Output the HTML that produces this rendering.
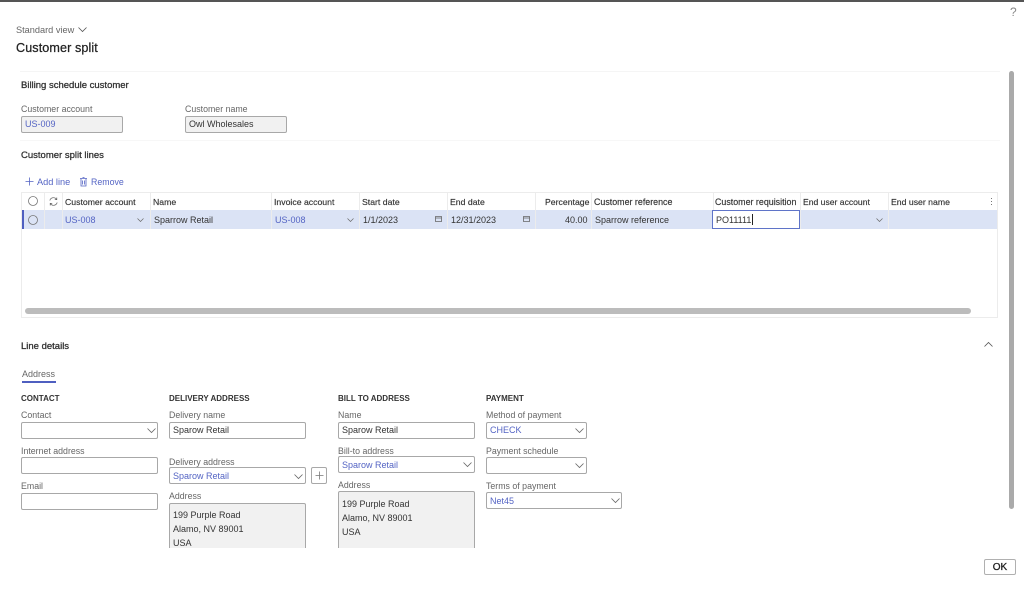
<!DOCTYPE html>
<html><head><meta charset="utf-8"><style>
html,body{margin:0;padding:0;background:#fff}
#p{position:relative;width:1024px;height:591px;overflow:hidden;background:#fff;font-family:"Liberation Sans",sans-serif;font-size:9px;color:#333;filter:blur(.3px)}
.t{position:absolute;line-height:14px;white-space:nowrap}
.l{color:#666}
.l8{font-size:8.8px !important}
.b{color:#333;font-size:9.5px;-webkit-text-stroke:.3px #333}
.c{color:#333;font-weight:bold;font-size:8px}
.h{color:#333;font-size:8.7px;-webkit-text-stroke:.15px #333}
.a{color:#5464c4}
.box{position:absolute;box-sizing:border-box;border:1px solid #a8a8a8;border-radius:2px;height:17px;background:#fff}
.ro{background:#f1f1f1}
.r{position:absolute}
.v{position:absolute;width:1px;background:#ececec;top:192px;height:37px}
svg{position:absolute;overflow:visible;fill:none}
#clip{position:absolute;left:0;top:390px;width:1024px;height:158px;overflow:hidden}
</style></head><body><div id="p">
<div class="r" style="left:0;top:0;width:1024px;height:1.5px;background:#555"></div>
<div class="t" style="left:1010px;top:5px;font-size:12px;color:#888">?</div>

<div class="t l" style="left:16px;top:23px;font-size:9.2px">Standard view</div>
<svg style="left:78px;top:27px" width="9" height="5"><path d="M.5.5L4.5 4.5L8.5.5" stroke="#555" stroke-width=".8"/></svg>
<div class="t" style="left:16px;top:41px;font-size:12.6px;color:#222;letter-spacing:.1px;-webkit-text-stroke:.25px #222">Customer split</div>

<div class="r" style="left:20px;top:71px;width:980px;height:1px;background:#f5f5f5"></div>
<div class="r" style="left:20px;top:140px;width:980px;height:1px;background:#f7f7f7"></div>
<div class="r" style="left:1009px;top:71px;width:5px;height:438px;background:#aaa;border-radius:3px"></div>

<div class="t b" style="left:21px;top:79px">Billing schedule customer</div>
<div class="t l l8" style="left:21px;top:102px">Customer account</div>
<div class="box ro" style="left:21px;top:116px;width:102px"></div>
<div class="t a" style="left:25px;top:117px">US-009</div>
<div class="t l l8" style="left:185px;top:102px">Customer name</div>
<div class="box ro" style="left:185px;top:116px;width:102px"></div>
<div class="t" style="left:189px;top:117px">Owl Wholesales</div>
<div class="t b" style="left:21px;top:149px">Customer split lines</div>

<svg style="left:25px;top:177px" width="10" height="10"><path d="M4.5 .5V8.5M.5 4.5H8.5" stroke="#5464c4" stroke-width=".8"/></svg>
<div class="t a" style="left:37px;top:175px;font-size:9.2px">Add line</div>
<svg style="left:79px;top:177px" width="9" height="10"><path d="M1 1.5H8M2 1.5V9H7V1.5M3.5 .5H5.5M3.5 3.5V7.5M5.5 3.5V7.5" stroke="#5464c4" stroke-width=".8"/></svg>
<div class="t a" style="left:91px;top:175px;font-size:8.8px">Remove</div>

<div class="r" style="left:21px;top:192px;width:977px;height:126px;box-sizing:border-box;border:1px solid #ececec"></div>
<div class="r" style="left:22px;top:210px;width:975px;height:19px;background:#dbe3f5"></div>
<div class="r" style="left:22px;top:210px;width:2px;height:19px;background:#4f5fc0"></div>
<div class="v" style="left:44px"></div><div class="v" style="left:62px"></div><div class="v" style="left:150px"></div><div class="v" style="left:271px"></div><div class="v" style="left:359px"></div><div class="v" style="left:447px"></div><div class="v" style="left:535px"></div><div class="v" style="left:591px"></div><div class="v" style="left:713px"></div><div class="v" style="left:800px"></div><div class="v" style="left:888px"></div>

<svg style="left:28px;top:196px" width="10" height="10"><circle cx="5" cy="5" r="4.5" stroke="#777" stroke-width=".8"/></svg>
<svg style="left:28px;top:215px" width="10" height="10"><circle cx="5" cy="5" r="4.5" stroke="#777" stroke-width=".8"/></svg>
<svg style="left:49px;top:197px" width="9" height="9"><path d="M.8 3.5A3.8 3.8 0 0 1 7.5 2.2M8.2 5.5A3.8 3.8 0 0 1 1.5 6.8M7.8 .5V2.6H5.8M1.2 8.5V6.4H3.2" stroke="#666" stroke-width=".7"/></svg>

<div class="t h" style="left:65px;top:195px">Customer account</div>
<div class="t h" style="left:153px;top:195px">Name</div>
<div class="t h" style="left:274px;top:195px">Invoice account</div>
<div class="t h" style="left:362px;top:195px">Start date</div>
<div class="t h" style="left:450px;top:195px">End date</div>
<div class="t h" style="left:545px;top:195px">Percentage</div>
<div class="t h" style="left:594px;top:195px;font-size:8.9px">Customer reference</div>
<div class="t h" style="left:715px;top:195px;font-size:8.9px">Customer requisition</div>
<div class="t h" style="left:803px;top:195px;font-size:8.6px">End user account</div>
<div class="t h" style="left:891px;top:195px">End user name</div>
<div class="r" style="left:991px;top:198px;width:1px;height:1px;background:#777;box-shadow:0 3px #777,0 6px #777"></div>

<div class="t a" style="left:65px;top:213px">US-008</div>
<svg style="left:137px;top:218px" width="7" height="4"><path d="M.5.5L3.5 3.5L6.5.5" stroke="#666" stroke-width=".7"/></svg>
<div class="t" style="left:154px;top:213px">Sparrow Retail</div>
<div class="t a" style="left:275px;top:213px">US-008</div>
<svg style="left:347px;top:218px" width="7" height="4"><path d="M.5.5L3.5 3.5L6.5.5" stroke="#666" stroke-width=".7"/></svg>
<div class="t" style="left:363px;top:213px">1/1/2023</div>
<svg style="left:435px;top:216px" width="7" height="6"><path d="M.5.5H6.5V5.5H.5ZM.5 2H6.5" stroke="#666" stroke-width=".8"/></svg>
<div class="t" style="left:451px;top:213px">12/31/2023</div>
<svg style="left:523px;top:216px" width="7" height="6"><path d="M.5.5H6.5V5.5H.5ZM.5 2H6.5" stroke="#666" stroke-width=".8"/></svg>
<div class="t" style="left:565px;top:213px">40.00</div>
<div class="t" style="left:595px;top:213px">Sparrow reference</div>
<div class="r" style="left:712px;top:210px;width:88px;height:19px;box-sizing:border-box;border:1px solid #5f74c8;background:#fff"></div>
<div class="t" style="left:716px;top:213px">PO11111</div>
<div class="r" style="left:752px;top:214px;width:1px;height:11px;background:#222"></div>
<svg style="left:876px;top:218px" width="7" height="4"><path d="M.5.5L3.5 3.5L6.5.5" stroke="#666" stroke-width=".7"/></svg>

<div class="r" style="left:25px;top:308px;width:946px;height:6px;background:#bcbcbc;border-radius:3px"></div>

<div class="t b" style="left:21px;top:340px">Line details</div>
<svg style="left:984px;top:342px" width="9" height="5"><path d="M.5 4.5L4.5.5L8.5 4.5" stroke="#555" stroke-width=".8"/></svg>
<div class="t l" style="left:22px;top:367px">Address</div>
<div class="r" style="left:22px;top:381px;width:34px;height:1.5px;background:#4f5fc0"></div>

<div class="t c" style="left:21px;top:392px">CONTACT</div>
<div class="t c" style="left:169px;top:392px">DELIVERY ADDRESS</div>
<div class="t c" style="left:338px;top:392px">BILL TO ADDRESS</div>
<div class="t c" style="left:486px;top:392px">PAYMENT</div>

<div class="t l l8" style="left:21px;top:408px">Contact</div>
<div class="box" style="left:21px;top:422px;width:137px"></div>
<svg style="left:147px;top:428px" width="9" height="5"><path d="M.5.5L4.5 4.5L8.5.5" stroke="#666" stroke-width=".8"/></svg>
<div class="t l l8" style="left:21px;top:444px">Internet address</div>
<div class="box" style="left:21px;top:457px;width:137px"></div>
<div class="t l l8" style="left:21px;top:479px">Email</div>
<div class="box" style="left:21px;top:493px;width:137px"></div>

<div class="t l l8" style="left:169px;top:408px">Delivery name</div>
<div class="box" style="left:169px;top:422px;width:137px"></div>
<div class="t" style="left:173px;top:423px">Sparow Retail</div>
<div class="t l l8" style="left:169px;top:455px">Delivery address</div>
<div class="box" style="left:169px;top:467px;width:137px"></div>
<div class="t a" style="left:173px;top:469px">Sparow Retail</div>
<svg style="left:294px;top:474px" width="9" height="5"><path d="M.5.5L4.5 4.5L8.5.5" stroke="#666" stroke-width=".8"/></svg>
<div class="box" style="left:311px;top:467px;width:16px"></div>
<svg style="left:315px;top:471px" width="9" height="9"><path d="M4.5 .5V8.5M.5 4.5H8.5" stroke="#777" stroke-width=".8"/></svg>
<div class="t l l8" style="left:169px;top:489px">Address</div>

<div class="t l l8" style="left:338px;top:408px">Name</div>
<div class="box" style="left:338px;top:422px;width:137px"></div>
<div class="t" style="left:342px;top:423px">Sparow Retail</div>
<div class="t l l8" style="left:338px;top:444px">Bill-to address</div>
<div class="box" style="left:338px;top:456px;width:137px"></div>
<div class="t a" style="left:342px;top:458px">Sparow Retail</div>
<svg style="left:463px;top:462px" width="9" height="5"><path d="M.5.5L4.5 4.5L8.5.5" stroke="#666" stroke-width=".8"/></svg>
<div class="t l l8" style="left:338px;top:478px">Address</div>

<div class="t l l8" style="left:486px;top:408px">Method of payment</div>
<div class="box" style="left:486px;top:422px;width:101px"></div>
<div class="t a" style="left:490px;top:423px">CHECK</div>
<svg style="left:575px;top:428px" width="9" height="5"><path d="M.5.5L4.5 4.5L8.5.5" stroke="#666" stroke-width=".8"/></svg>
<div class="t l l8" style="left:486px;top:444px">Payment schedule</div>
<div class="box" style="left:486px;top:457px;width:101px"></div>
<svg style="left:575px;top:463px" width="9" height="5"><path d="M.5.5L4.5 4.5L8.5.5" stroke="#666" stroke-width=".8"/></svg>
<div class="t l l8" style="left:486px;top:479px">Terms of payment</div>
<div class="box" style="left:486px;top:492px;width:136px"></div>
<div class="t a" style="left:490px;top:494px">Net45</div>
<svg style="left:611px;top:498px" width="9" height="5"><path d="M.5.5L4.5 4.5L8.5.5" stroke="#666" stroke-width=".8"/></svg>

<div id="clip">
<div class="box ro" style="left:169px;top:113px;width:137px;height:80px"></div>
<div class="t" style="left:173px;top:118px">199 Purple Road</div>
<div class="t" style="left:173px;top:132px">Alamo, NV 89001</div>
<div class="t" style="left:173px;top:146px">USA</div>
<div class="box ro" style="left:338px;top:101px;width:137px;height:80px"></div>
<div class="t" style="left:342px;top:107px">199 Purple Road</div>
<div class="t" style="left:342px;top:121px">Alamo, NV 89001</div>
<div class="t" style="left:342px;top:135px">USA</div>
</div>

<div class="box" style="left:984px;top:559px;width:32px;height:16px;border-color:#b0b0b0"></div>
<div class="t" style="left:984px;top:561px;width:32px;text-align:center;font-size:10px;color:#222;-webkit-text-stroke:.3px #222">OK</div>
</div></body></html>
